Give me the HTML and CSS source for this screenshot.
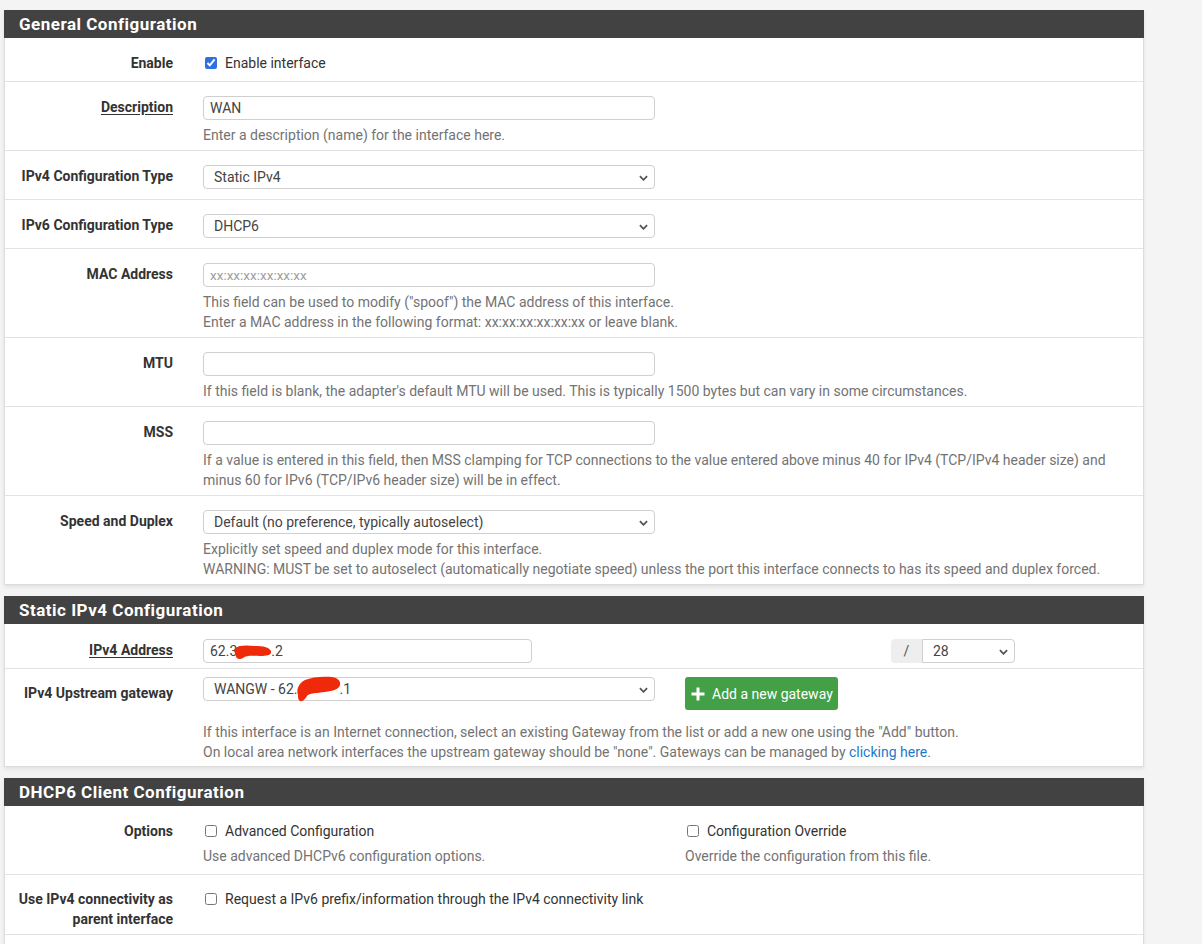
FILE: index.html
```html
<!DOCTYPE html>
<html>
<head>
<meta charset="utf-8">
<link rel="stylesheet" href="styles.css">
</head>
<body>
<div class="page">
  <section class="panel">
    <h2 class="panel-heading">General Configuration</h2>
    <div class="row row-plain row-enable">
      <div class="label">Enable</div>
      <div class="main"><label class="check"><input type="checkbox" checked><span>Enable interface</span></label></div>
    </div>
    <div class="row">
      <div class="label lbl-input"><span class="ul">Description</span></div>
      <div class="main"><div class="field text">WAN</div></div>
      <div class="help">Enter a description (name) for the interface here.</div>
    </div>
    <div class="row row-plain">
      <div class="label lbl-input">IPv4 Configuration Type</div>
      <div class="main"><div class="field select">Static IPv4<svg class="chev" viewBox="0 0 10 6"><path d="M1 1l4 4 4-4" /></svg></div></div>
    </div>
    <div class="row row-plain">
      <div class="label lbl-input">IPv6 Configuration Type</div>
      <div class="main"><div class="field select">DHCP6<svg class="chev" viewBox="0 0 10 6"><path d="M1 1l4 4 4-4" /></svg></div></div>
    </div>
    <div class="row">
      <div class="label lbl-input">MAC Address</div>
      <div class="main"><div class="field text placeholder">xx:xx:xx:xx:xx:xx</div></div>
      <div class="help">This field can be used to modify ("spoof") the MAC address of this interface.<br>Enter a MAC address in the following format: xx:xx:xx:xx:xx:xx or leave blank.</div>
    </div>
    <div class="row">
      <div class="label lbl-input">MTU</div>
      <div class="main"><div class="field text"></div></div>
      <div class="help">If this field is blank, the adapter's default MTU will be used. This is typically 1500 bytes but can vary in some circumstances.</div>
    </div>
    <div class="row">
      <div class="label lbl-input">MSS</div>
      <div class="main"><div class="field text"></div></div>
      <div class="help">If a value is entered in this field, then MSS clamping for TCP connections to the value entered above minus 40 for IPv4 (TCP/IPv4 header size) and minus 60 for IPv6 (TCP/IPv6 header size) will be in effect.</div>
    </div>
    <div class="row">
      <div class="label lbl-input">Speed and Duplex</div>
      <div class="main"><div class="field select">Default (no preference, typically autoselect)<svg class="chev" viewBox="0 0 10 6"><path d="M1 1l4 4 4-4" /></svg></div></div>
      <div class="help">Explicitly set speed and duplex mode for this interface.<br>WARNING: MUST be set to autoselect (automatically negotiate speed) unless the port this interface connects to has its speed and duplex forced.</div>
    </div>
  </section>

  <section class="panel">
    <h2 class="panel-heading">Static IPv4 Configuration</h2>
    <div class="row row-addr">
      <div class="label lbl-input"><span class="ul">IPv4 Address</span></div>
      <div class="main"><div class="field text field-short">62.3<span class="redact r1"><svg viewBox="0 0 40 18"><path d="M2 5 C6 2 14 2 22 3 C30 3 36 4 38 8 C39 12 34 13 27 13 C20 13 14 12 10 15 C7 17 3 16 3 13 C2 11 1 8 2 5 Z"/></svg></span>.2</div></div>
      <div class="side">
        <div class="subnet"><span class="addon">/</span><div class="field select subnet-sel">28<svg class="chev" viewBox="0 0 10 6"><path d="M1 1l4 4 4-4" /></svg></div></div>
      </div>
    </div>
    <div class="row row-gw">
      <div class="label lbl-btn">IPv4 Upstream gateway</div>
      <div class="main"><div class="field select">WANGW - 62.<span class="redact r2"><svg viewBox="0 0 46 28"><path d="M3 20 C1 14 4 8 10 5 C17 2 28 1 37 2 C43 3 46 6 45 10 C44 14 38 16 30 17 C22 18 14 18 12 21 C10 24 8 27 5 26 C3 25 3 22 3 20 Z"/></svg></span>.1<svg class="chev" viewBox="0 0 10 6"><path d="M1 1l4 4 4-4" /></svg></div></div>
      <div class="side"><span class="btn-success"><svg class="plus" viewBox="0 0 16 16"><path d="M8 1.5v13M1.5 8h13"/></svg>Add a new gateway</span></div>
      <div class="help help-gw">If this interface is an Internet connection, select an existing Gateway from the list or add a new one using the "Add" button.<br>On local area network interfaces the upstream gateway should be "none". Gateways can be managed by <a href="#">clicking here</a>.</div>
    </div>
  </section>

  <section class="panel">
    <h2 class="panel-heading">DHCP6 Client Configuration</h2>
    <div class="row row-opts">
      <div class="label">Options</div>
      <div class="main"><label class="check"><input type="checkbox"><span>Advanced Configuration</span></label></div>
      <div class="side"><label class="check"><input type="checkbox"><span>Configuration Override</span></label></div>
      <div class="help help-main">Use advanced DHCPv6 configuration options.</div>
      <div class="help help-side">Override the configuration from this file.</div>
    </div>
    <div class="row row-parent">
      <div class="label">Use IPv4 connectivity as parent interface</div>
      <div class="main wide"><label class="check"><input type="checkbox"><span>Request a IPv6 prefix/information through the IPv4 connectivity link</span></label></div>
    </div>
    <div class="row row-plain">
      <div class="label">&nbsp;</div>
      <div class="main"></div>
    </div>
  </section>
</div>
</body>
</html>
```

FILE: styles.css
```css
* { box-sizing: border-box; }
html, body { margin: 0; padding: 0; }
body {
  background: #f4f4f4;
  font-family: Roboto, "Liberation Sans", Arial, sans-serif;
  font-size: 14px;
  color: #333;
}
.page {
  padding: 10px 0 0 4px;
  width: 1144px;
}
.panel {
  background: #fff;
  border: 1px solid #dcdcdc;
  border-top: none;
  box-shadow: 0 2px 4px rgba(0,0,0,0.08);
  margin-bottom: 11px;
}
.panel-heading {
  background: #424242;
  color: #fff;
  font-size: 17px;
  font-weight: 700;
  letter-spacing: 0.5px;
  height: 28px;
  line-height: 28px;
  padding: 0 15px;
  margin: 0 -1px;
}
.row {
  display: grid;
  grid-template-columns: 168px 452px 1fr;
  column-gap: 30px;
  padding: 14px 14px 5px 0;
  border-top: 1px solid #e3e3e3;
}
.panel-heading + .row { border-top: none; padding-top: 15px; }
.row-plain { padding-bottom: 10px; }
.row-enable { padding-bottom: 8px; }
.label {
  grid-column: 1;
  text-align: right;
  font-weight: 700;
  color: #333;
  line-height: 20px;
}
.lbl-input { line-height: 22px; padding-top: 0; }
.ul { text-decoration: underline; text-underline-offset: 2px; }
.main { grid-column: 2; }
.main.wide { grid-column: 2 / 4; }
.side { grid-column: 3; }
.help {
  grid-column: 2 / 4;
  color: #737373;
  line-height: 20px;
  margin-top: 5px;
}
.help-main { grid-column: 2; }
.help-side { grid-column: 3; }
.help a { color: #1e7ac8; text-decoration: none; }

.check {
  display: flex;
  align-items: center;
  line-height: 20px;
  color: #333;
}
.check input {
  width: 12px;
  height: 12px;
  margin: 0 8px 0 2px;
  accent-color: #2f6fe0;
}
.field {
  position: relative;
  height: 24px;
  border: 1px solid #cfcfcf;
  border-radius: 4px;
  padding: 0 10px;
  line-height: 22px;
  color: #444;
  background: #fff;
  white-space: nowrap;
}
.field.text { padding-left: 6px; }
.placeholder { color: #a0a0a0; font-size: 13.5px; }
.select .chev {
  position: absolute;
  right: 6px;
  top: 9px;
  width: 9px;
  height: 6px;
  fill: none;
  stroke: #555;
  stroke-width: 2;
}
.field-short { width: 329px; }
.subnet {
  display: flex;
  margin-left: 206px;
  width: 124px;
}
.addon {
  width: 31px;
  height: 24px;
  background: #eee;
  text-align: center;
  line-height: 24px;
  color: #555;
  border-radius: 4px 0 0 4px;
}
.subnet-sel {
  flex: 1;
  border-radius: 0 4px 4px 0;
}
.row-addr { padding-bottom: 5px; }
.row-gw { padding-top: 8px; padding-bottom: 4px; }
.lbl-btn { line-height: 33px; }
.help-gw { margin-top: 12px; }
.btn-success {
  display: inline-flex;
  align-items: center;
  height: 33px;
  padding: 0 5px 0 5px;
  background: #43a047;
  color: #fff;
  border-radius: 3px;
  font-size: 14px;
}
.plus {
  width: 16px;
  height: 16px;
  margin-right: 6px;
  stroke: #fff;
  stroke-width: 3;
  fill: none;
}
.redact {
  display: inline-block;
  position: relative;
  vertical-align: top;
}
.redact svg { position: absolute; fill: #ef2a0a; }
.r1 { width: 34px; }
.r1 svg { left: -4px; top: 3px; width: 40px; height: 18px; }
.r2 { width: 42px; }
.r2 svg { left: -2px; top: -3px; width: 46px; height: 28px; }
.row-opts { padding-bottom: 8px; }
.row-parent { padding-bottom: 5px; }
```
